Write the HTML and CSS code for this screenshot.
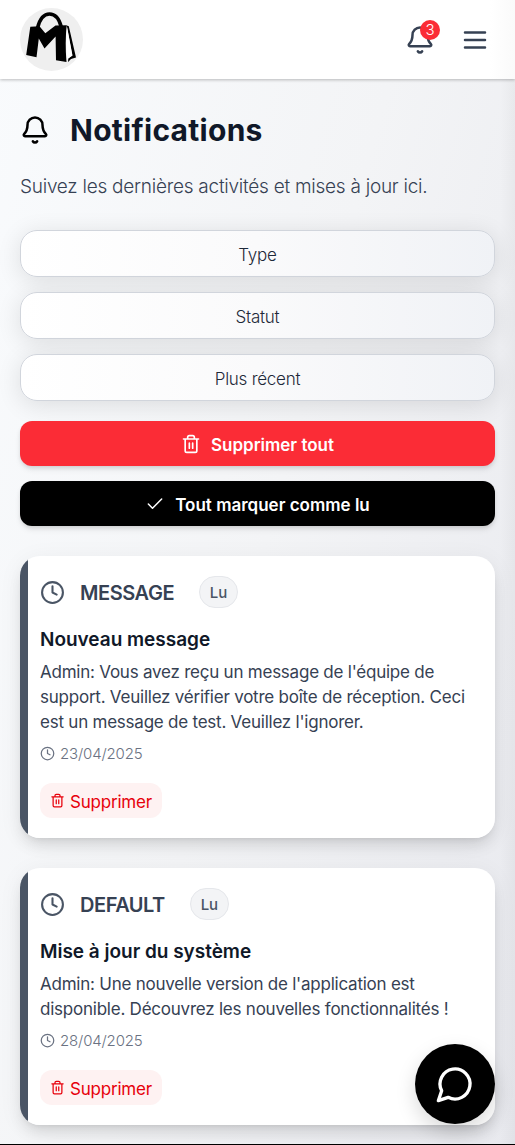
FILE: index.html
```html
<!DOCTYPE html>
<html lang="fr">
<head>
<meta charset="utf-8">
<meta name="viewport" content="width=device-width, initial-scale=1">
<title>Notifications</title>
<link rel="stylesheet" href="styles.css">
</head>
<body>
<svg width="0" height="0" class="sprite" aria-hidden="true">
  <symbol id="bell" viewBox="0 0 24 24"><path d="M10.268 21a2 2 0 0 0 3.464 0"/><path d="M3.262 15.326A1 1 0 0 0 4 17h16a1 1 0 0 0 .74-1.673C19.41 13.956 18 12.499 18 8A6 6 0 0 0 6 8c0 4.499-1.411 5.956-2.738 7.326"/></symbol>
  <symbol id="menu" viewBox="0 0 24 24"><path d="M4 6h16M4 12h16M4 18h16"/></symbol>
  <symbol id="trash" viewBox="0 0 24 24"><path d="M3 6h18M19 6v14c0 1-1 2-2 2H7c-1 0-2-1-2-2V6M8 6V4c0-1 1-2 2-2h4c1 0 2 1 2 2v2M10 11v6M14 11v6"/></symbol>
  <symbol id="check" viewBox="0 0 24 24"><path d="M20 6 9 17l-5-5"/></symbol>
  <symbol id="clock" viewBox="0 0 24 24"><circle cx="12" cy="12" r="10"/><path d="M12 6v6l4 2"/></symbol>
  <symbol id="chat" viewBox="0 0 24 24"><path d="M7.9 20A9 9 0 1 0 4 16.1L2 22Z"/></symbol>
</svg>
<div class="page">
  <header class="topbar">
    <svg class="logo" viewBox="0 0 63 63">
      <circle cx="31.5" cy="31.5" r="31.5" fill="#efefef"/>
      <path d="M17.500 20C20 10 24.500 6 29.500 6S39 10 41.300 19" fill="none" stroke="#000" stroke-width="3.600"/>
      <path d="M10.300 18.800 19.500 18.300 25.300 25.300 35.500 17.500 46.800 17.300Q44.800 34 46.500 54L36 52.300 35.600 28.500 24.500 40.500 18.800 30.500 16.500 49.300 6.200 47Z"/>
      <path d="M46.800 17.500 48.800 18.200 56 49.500 51 51 48 53.900 48.300 50.500 52.500 47.500Z"/>
      <path d="M46.900 18.800 52.300 47.500 48.300 50.200 46.900 52Q45.600 34 46.900 18.800Z" fill="#fff"/>
    </svg>
    <div class="actions">
      <div class="bell"><svg class="icon i30"><use href="#bell"/></svg><span class="count">3</span></div>
      <svg class="icon i30"><use href="#menu"/></svg>
    </div>
  </header>
  <main class="content">
    <div class="heading"><svg class="icon i30"><use href="#bell"/></svg><h1>Notifications</h1></div>
    <p class="intro">Suivez les dernières activités et mises à jour ici.</p>
    <div class="filters">
      <button class="filter">Type</button>
      <button class="filter">Statut</button>
      <button class="filter">Plus récent</button>
    </div>
    <div class="bulk">
      <button class="action danger"><svg class="icon i20"><use href="#trash"/></svg><span>Supprimer tout</span></button>
      <button class="action dark"><svg class="icon i20 thin"><use href="#check"/></svg><span>Tout marquer comme lu</span></button>
    </div>
    <section class="list">
      <article class="card">
        <div class="kind"><svg class="icon i25"><use href="#clock"/></svg><span class="name">MESSAGE</span><span class="status">Lu</span></div>
        <h2>Nouveau message</h2>
        <p class="text">Admin: Vous avez reçu un message de l'équipe de<br>support. Veuillez vérifier votre boîte de réception. Ceci<br>est un message de test. Veuillez l'ignorer.</p>
        <div class="date"><svg class="icon i15"><use href="#clock"/></svg><span>23/04/2025</span></div>
        <button class="remove"><svg class="icon i15"><use href="#trash"/></svg><span>Supprimer</span></button>
      </article>
      <article class="card">
        <div class="kind"><svg class="icon i25"><use href="#clock"/></svg><span class="name">DEFAULT</span><span class="status">Lu</span></div>
        <h2>Mise à jour du système</h2>
        <p class="text">Admin: Une nouvelle version de l'application est<br>disponible. Découvrez les nouvelles fonctionnalités !</p>
        <div class="date"><svg class="icon i15"><use href="#clock"/></svg><span>28/04/2025</span></div>
        <button class="remove"><svg class="icon i15"><use href="#trash"/></svg><span>Supprimer</span></button>
      </article>
    </section>
  </main>
  <button class="chat"><svg class="icon i40"><use href="#chat"/></svg></button>
</div>
</body>
</html>
```
FILE: styles.css
```css
* { box-sizing: border-box; margin: 0; }
body { font-family: Inter, "Liberation Sans", sans-serif; color: #364153; }
button { font: inherit; border: 0; padding: 0; }
.sprite { position: absolute; }
.page {
  position: relative;
  height: 1145px;
  overflow: hidden;
  border-bottom: 1px solid #000;
  background: linear-gradient(to right, transparent 500px, rgba(0, 0, 0, .03)), linear-gradient(105deg, #f9fbfd 0%, #f3f4f6 50%, #e8e9ee 100%);
}
.icon { display: block; flex: none; fill: none; stroke: currentColor; stroke-width: 2; stroke-linecap: round; stroke-linejoin: round; }
.i15 { width: 15px; height: 15px; }
.i20 { width: 20px; height: 20px; }
.i25 { width: 25px; height: 25px; }
.i30 { width: 30px; height: 30px; }
.i40 { width: 40px; height: 40px; }
.thin { stroke-width: 1.8; }

.topbar {
  display: flex;
  align-items: center;
  justify-content: space-between;
  height: 79px;
  padding: 0 25px 0 20px;
  background: linear-gradient(to right, #fff 490px, #fafafa);
  box-shadow: 0 1px 3px rgba(0, 0, 0, .25);
}
.logo { width: 63px; height: 63px; }
.actions { display: flex; gap: 25px; color: #364153; }
.bell { position: relative; }
.count {
  position: absolute;
  top: -5px;
  left: 15px;
  width: 20px;
  height: 20px;
  border-radius: 50%;
  background: #fb2c36;
  color: #fff;
  font-size: 15px;
  font-weight: 300;
  line-height: 20px;
  text-align: center;
}

.content { padding: 31px 20px 0; }
.heading { display: flex; align-items: center; gap: 20px; height: 40px; color: #000; }
h1 { color: #101828; font-size: 30px; font-weight: 700; line-height: 40px; letter-spacing: .28px; white-space: nowrap; }
.intro { margin-top: 22px; font-size: 19px; font-weight: 300; line-height: 30px; letter-spacing: -.25px; white-space: nowrap; color: #364153; }
.filters { display: grid; gap: 15px; margin-top: 28px; }
.filter {
  height: 47px;
  padding-top: 2px;
  border: 1px solid #d1d5dc;
  border-radius: 17px;
  background: linear-gradient(to right, #fff, #fafafb 50%, #f0f2f6);
  box-shadow: 0 4px 25px rgba(0, 0, 0, .11);
  color: #1e2939;
  font-size: 17px;
  font-weight: 300;
  letter-spacing: -.25px;
}
.bulk { display: grid; gap: 15px; margin-top: 20px; }
.action {
  position: relative;
  display: flex;
  align-items: center;
  justify-content: center;
  gap: 10px;
  height: 45px;
  border-radius: 12px;
  color: #fff;
  font-size: 17px;
  font-weight: 600;
  line-height: 25px;
  box-shadow: 0 4px 6px -1px rgba(0, 0, 0, .1), 0 2px 4px -1px rgba(0, 0, 0, .1);
}
.action span { padding-top: 3px; }
.danger { background: #fb2c36; }
.dark { background: #000; }

.list { display: grid; gap: 30px; margin-top: 30px; }
.card {
  padding: 20px;
  border-radius: 20px;
  background: linear-gradient(to right, #4a5565 8px, #fff 8px);
  box-shadow: 0 10px 15px -3px rgba(0, 0, 0, .1), 0 4px 6px -4px rgba(0, 0, 0, .1), 0 4px 25px rgba(0, 0, 0, .06);
}
.kind { display: flex; align-items: center; height: 32px; color: #4a5565; }
.name { margin-left: 15px; padding-top: 1px; color: #364153; font-size: 20px; font-weight: 600; letter-spacing: -.45px; }
.status {
  width: 39px;
  height: 32px;
  margin-left: 25px;
  border: 1px solid #e5e7eb;
  border-radius: 16px;
  background: #f3f4f6;
  color: #4a5565;
  font-size: 15px;
  font-weight: 500;
  line-height: 32px;
  text-align: center;
}
h2 { margin-top: 17px; color: #101828; font-size: 19px; font-weight: 600; line-height: 30px; letter-spacing: -.02px; white-space: nowrap; }
.text { margin-top: 5px; font-size: 17px; line-height: 25px; letter-spacing: -.23px; white-space: nowrap; color: #364153; }
.date { display: flex; align-items: center; gap: 5px; height: 20px; margin-top: 8px; color: #6a7282; font-size: 15px; font-weight: 300; letter-spacing: -.15px; }
.remove {
  display: flex;
  align-items: center;
  gap: 5px;
  width: 122px;
  height: 35px;
  margin-top: 20px;
  padding: 0 10px;
  border-radius: 12px;
  background: #fef2f2;
  color: #e7000b;
  font-size: 17px;
  letter-spacing: -.2px;
}
.remove span { padding-top: 2px; }
.chat {
  position: absolute;
  top: 1044px;
  right: 20px;
  display: grid;
  place-items: center;
  width: 80px;
  height: 80px;
  border-radius: 50%;
  background: #000;
  color: #fff;
  box-shadow: 0 8px 20px rgba(0, 0, 0, .15);
}
```
